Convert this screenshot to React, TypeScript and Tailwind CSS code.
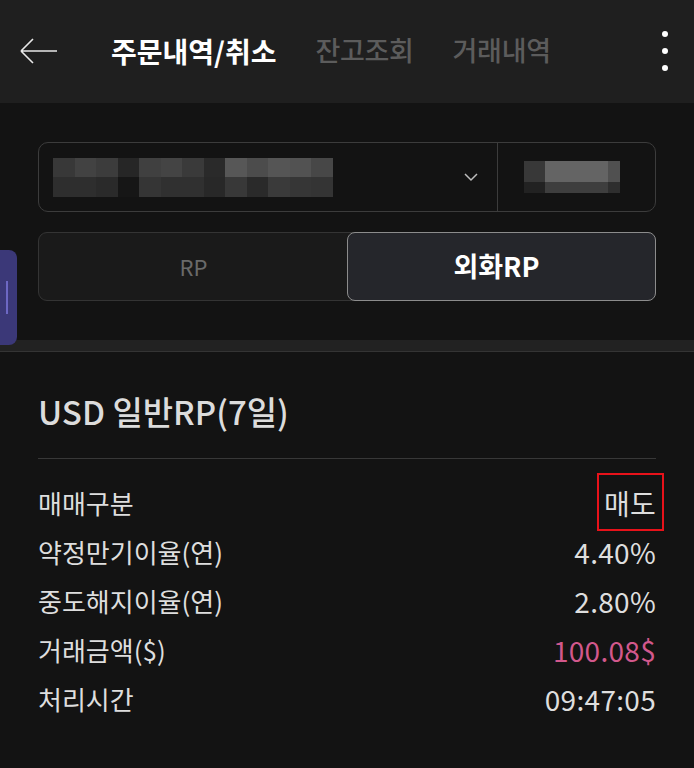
import React from "react";

const FONT = '"Noto Sans CJK KR", "Noto Sans", sans-serif';

const blurTop = ["#383838", "#424242", "#3c3c3c", "#262626", "#404040", "#444444", "#3a3a3a", "#2a2a2a", "#575757", "#4c4c4c", "#555555", "#525252", "#474747"];
const blurBottom = ["#2e2e2e", "#2e2e2e", "#2a2a2a", "#161616", "#353535", "#303030", "#303030", "#282828", "#383838", "#2a2a2a", "#3a3a3a", "#363636", "#343434"];

const rows: { label: string; value: string; pink?: boolean }[] = [
  { label: "매매구분", value: "매도" },
  { label: "약정만기이율(연)", value: "4.40%" },
  { label: "중도해지이율(연)", value: "2.80%" },
  { label: "거래금액($)", value: "100.08$", pink: true },
  { label: "처리시간", value: "09:47:05" },
];

function Pixels({ cols }: { cols: string[][] }) {
  return (
    <div className="flex flex-col">
      {cols.map((row, i) => (
        <div key={i} className="flex">
          {row.map((c, j) => (
            <div key={j} className="w-[21.5px] h-[19.5px]" style={{ backgroundColor: c }} />
          ))}
        </div>
      ))}
    </div>
  );
}

export default function App() {
  return (
    <div className="relative w-[694px] h-[768px] overflow-hidden bg-[#131313]" style={{ fontFamily: FONT }}>
      {/* header */}
      <div className="h-[103px] bg-[#1f1f1f] flex items-center">
        <svg width="40" height="40" viewBox="0 0 40 40" className="ml-[19px] mt-[-2px]" fill="none" stroke="#e8e8e8" strokeWidth="1.6">
          <path d="M2 20 H38 M2 20 L14 8 M2 20 L14 32" />
        </svg>
        <div className="ml-[52px] flex items-center gap-[39px] mt-[-2px]">
          <span className="text-[28px] font-bold text-white">주문내역/취소</span>
          <span className="text-[27px] font-medium text-[#5c5c5c] tracking-[-0.3px]">잔고조회</span>
          <span className="text-[27px] font-medium text-[#5c5c5c] tracking-[-0.3px]">거래내역</span>
        </div>
        <div className="ml-auto mr-[26px] flex flex-col gap-[11px] mt-[-2px]">
          <div className="w-[6px] h-[6px] rounded-full bg-white" />
          <div className="w-[6px] h-[6px] rounded-full bg-white" />
          <div className="w-[6px] h-[6px] rounded-full bg-white" />
        </div>
      </div>

      {/* account + toggle */}
      <div className="px-[38px] pt-[39px] pb-[39px] flex flex-col gap-[20px]">
        <div className="h-[70px] rounded-[10px] border border-[#3c3c3c] flex">
          <div className="flex-1 flex items-center pl-[14px] pr-[14px]">
            <Pixels cols={[blurTop, blurBottom]} />
            <svg width="16" height="10" viewBox="0 0 16 10" className="ml-auto mr-[4px]" fill="none" stroke="#bdbdbd" strokeWidth="1.5">
              <path d="M2 2 L8 8 L14 2" />
            </svg>
          </div>
          <div className="w-px bg-[#3c3c3c]" />
          <div className="w-[157px] flex items-center justify-center pr-[10px]">
            <div className="flex flex-col">
              <div className="flex h-[21px]">
                <div className="w-[21px] bg-[#383838]" />
                <div className="w-[63px] bg-[#646464]" />
                <div className="w-[12px] bg-[#505050]" />
              </div>
              <div className="flex h-[11px]">
                <div className="w-[21px] bg-[#222222]" />
                <div className="w-[63px] bg-[#3e3e3e]" />
                <div className="w-[12px] bg-[#2e2e2e]" />
              </div>
            </div>
          </div>
        </div>
        <div className="h-[69px] rounded-[9px] border border-[#343434] bg-[#1a1a1a] flex">
          <div className="flex-1 flex items-center justify-center text-[22px] text-[#6a6a6a]">RP</div>
          <div className="w-[309px] -m-px rounded-[8px] border-[1.5px] border-[#8c8c8c] bg-[#25262b] flex items-center justify-center pr-[10px] text-[27px] font-bold text-white">
            외화RP
          </div>
        </div>
      </div>

      {/* side handle */}
      <div className="absolute left-0 top-[250px] w-[17px] h-[95px] rounded-r-[8px] bg-[#3b3878] flex items-center pl-[6px]">
        <div className="w-[2px] h-[33px] bg-[#6d68c4]" />
      </div>

      {/* band */}
      <div className="h-[12px] bg-[#222222] border-b border-[#343434]" />

      {/* detail */}
      <div className="px-[38px]">
        <div className="h-[107px] flex items-center pt-[14px] border-b border-[#383838]">
          <span className="text-[33px] font-medium text-[#dcdcdc]">USD 일반RP(7일)</span>
        </div>
        <div className="pt-[19px] flex flex-col">
          {rows.map((r) => (
            <div key={r.label} className="h-[49px] flex items-center justify-between text-[#dedede]">
              <span className="text-[26px]">{r.label}</span>
              <span className={"text-[28px] tracking-[0.3px] " + (r.pink ? "text-[#d2588c]" : "")}>{r.value}</span>
            </div>
          ))}
        </div>
      </div>

      {/* highlight box */}
      <div className="absolute left-[597px] top-[473px] w-[67px] h-[58px] border-2 border-[#e8121a]" />
    </div>
  );
}
